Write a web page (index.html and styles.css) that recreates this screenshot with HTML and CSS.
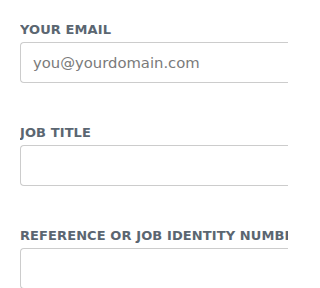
FILE: index.html
```html
<!DOCTYPE html>
<html>
<head>
<meta charset="utf-8">
<link rel="stylesheet" href="styles.css">
</head>
<body>
<form class="form">
  <div class="field">
    <label class="label" for="email">YOUR EMAIL</label>
    <input class="input" id="email" type="email" placeholder="you@yourdomain.com">
  </div>
  <div class="field">
    <label class="label" for="job">JOB TITLE</label>
    <input class="input" id="job" type="text">
  </div>
  <div class="field">
    <label class="label" for="ref">REFERENCE OR JOB IDENTITY NUMBER</label>
    <input class="input" id="ref" type="text">
  </div>
</form>
</body>
</html>
```
FILE: styles.css
```css
html, body {
  margin: 0;
  padding: 0;
  background: #fff;
  overflow: hidden;
}
.form {
  padding: 22px 0 0 20px;
  width: 268px;
  display: flex;
  flex-direction: column;
  gap: 42px;
}
.field {
  display: flex;
  flex-direction: column;
  gap: 4px;
  overflow: hidden;
}
.label {
  font-family: "DejaVu Sans", sans-serif;
  font-weight: bold;
  font-size: 13px;
  line-height: 16px;
  letter-spacing: 0.1px;
  color: #5b6671;
  white-space: nowrap;
  overflow: hidden;
}
.input {
  box-sizing: border-box;
  height: 41px;
  width: 100%;
  margin: 0;
  border: 1px solid #cccccc;
  border-right: 0;
  border-radius: 4px 0 0 4px;
  padding: 0 12px;
  font-family: "DejaVu Sans", sans-serif;
  font-size: 14.8px;
  color: #333;
  background: #fff;
  outline: none;
}
.input::placeholder {
  color: #7a7a7a;
}
```
